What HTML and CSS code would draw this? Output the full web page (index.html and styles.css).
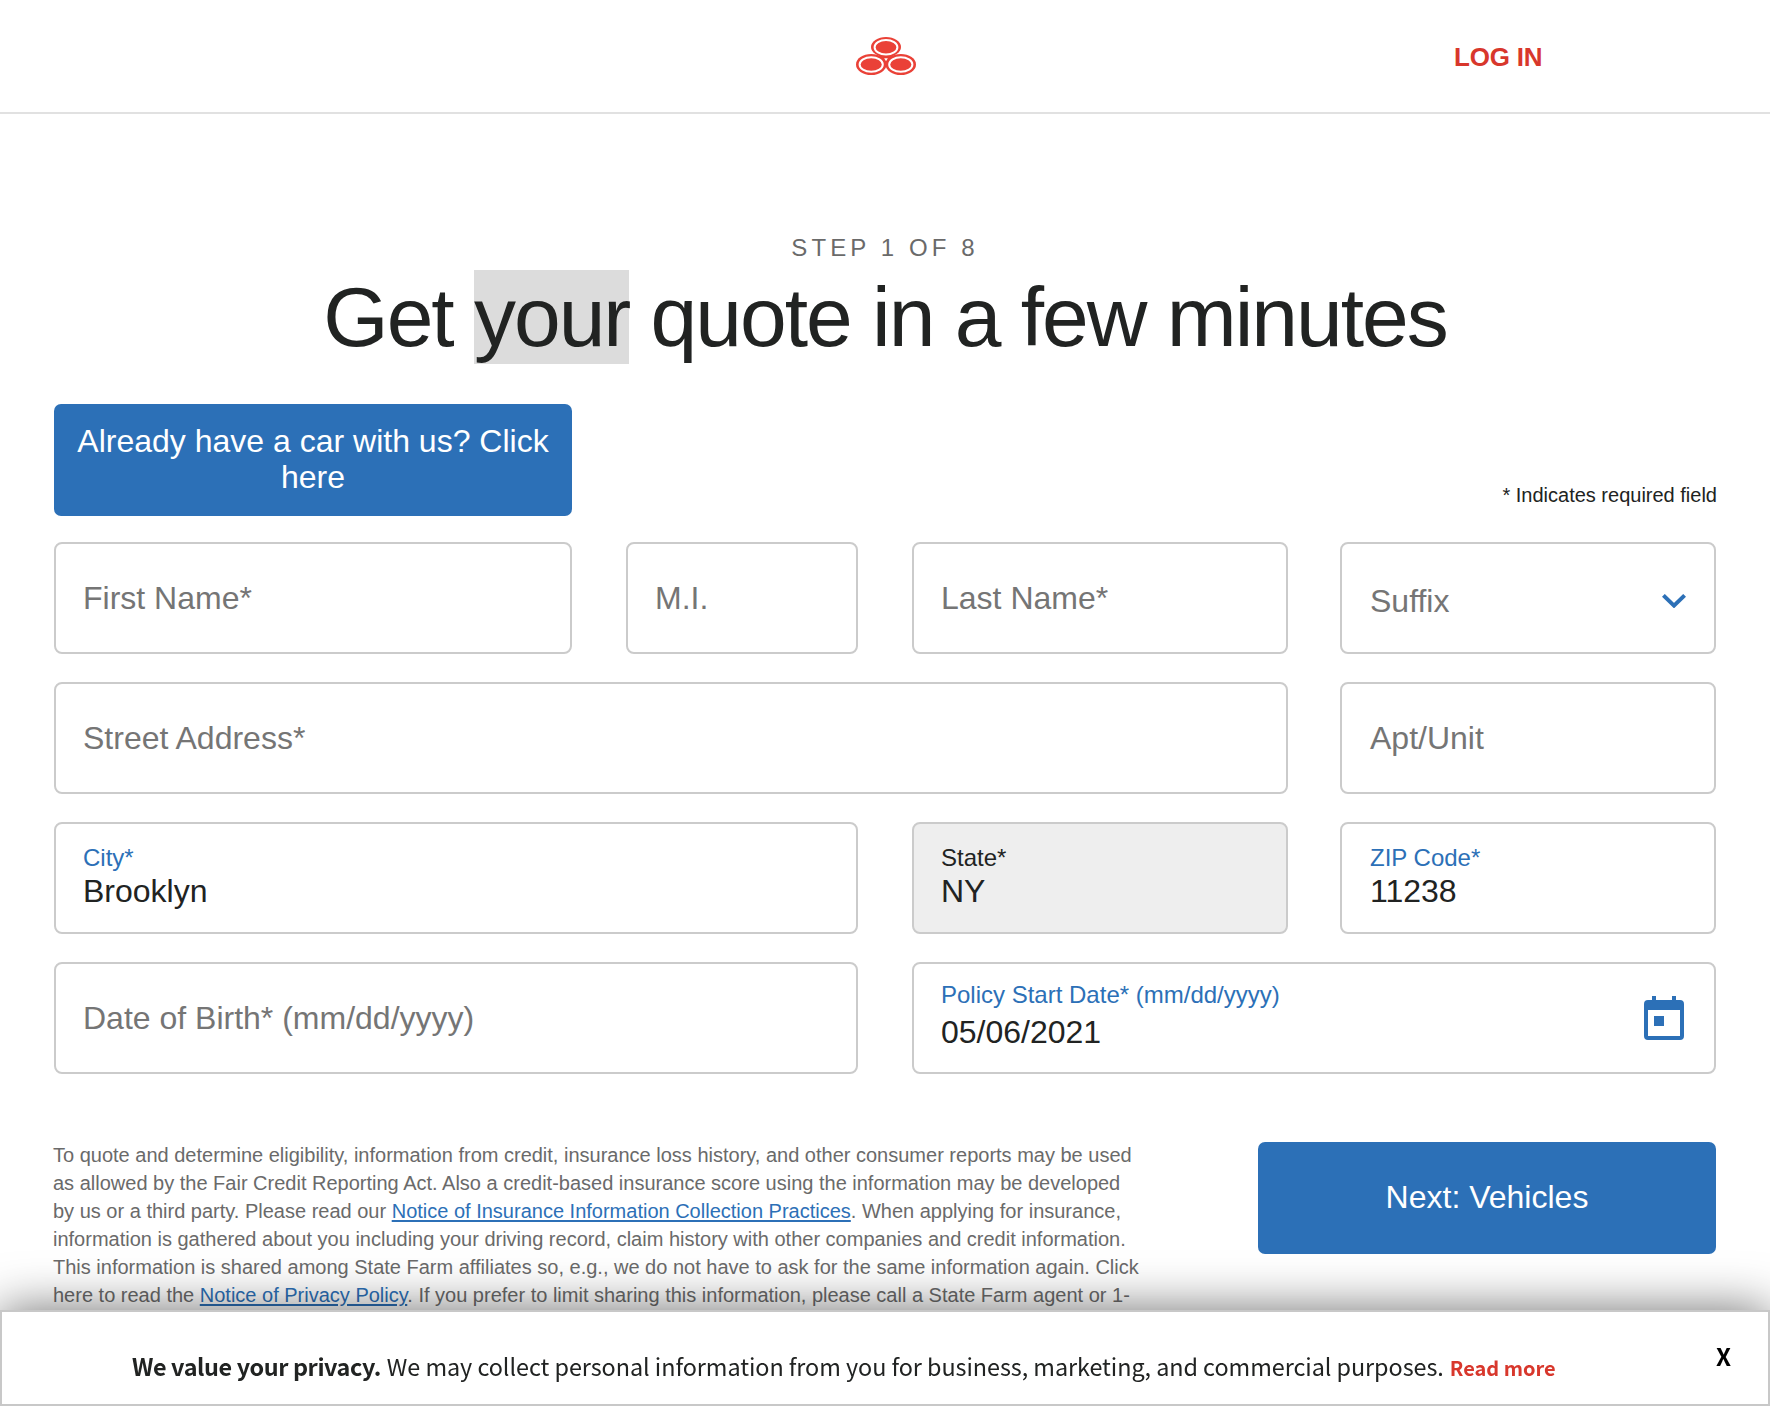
FILE: index.html
```html
<!DOCTYPE html>
<html lang="en">
<head>
<meta charset="utf-8">
<title>Get your quote</title>
<link rel="stylesheet" href="styles.css">
</head>
<body>
<header class="site-header">
  <a class="logo" aria-label="Home">
    <svg width="60" height="38" viewBox="0 0 60 38">
      <g fill="#ea4137">
        <path d="M22 17H38L32 29H28Z"/>
        <ellipse cx="30" cy="10" rx="15" ry="10"/>
        <ellipse cx="15.2" cy="27.5" rx="15.2" ry="10.5"/>
        <ellipse cx="44.8" cy="27.5" rx="15.2" ry="10.5"/>
      </g>
      <g fill="#ea4137" stroke="#fff" stroke-width="2">
        <ellipse cx="30" cy="10.2" rx="11.4" ry="7.2"/>
        <ellipse cx="15.2" cy="27.5" rx="11.6" ry="7.3"/>
        <ellipse cx="44.8" cy="27.5" rx="11.6" ry="7.3"/>
      </g>
      <path d="M28.2 21.3H31.8L30 24.3Z" fill="#fff"/>
    </svg>
  </a>
  <a class="login">LOG IN</a>
</header>

<main class="page">
  <p class="step">STEP 1 OF 8</p>
  <h1 class="title">Get <span class="selected">your</span> quote in a few minutes</h1>

  <div class="intro">
    <a class="button button-existing">Already have a car with us? Click here</a>
    <p class="required-note">* Indicates required field</p>
  </div>

  <form class="fields">
    <div class="field first"><span class="placeholder">First Name*</span></div>
    <div class="field middle"><span class="placeholder">M.I.</span></div>
    <div class="field last"><span class="placeholder">Last Name*</span></div>
    <div class="field end select">
      <span class="placeholder">Suffix</span>
      <svg class="chevron" width="24" height="14" viewBox="0 0 24 14"><path d="M1.4 1.4L12 11.6L22.6 1.4" fill="none" stroke="#2c70b7" stroke-width="4"/></svg>
    </div>

    <div class="field street"><span class="placeholder">Street Address*</span></div>
    <div class="field end"><span class="placeholder">Apt/Unit</span></div>

    <div class="field half-left filled"><span class="label">City*</span><span class="value">Brooklyn</span></div>
    <div class="field last filled disabled"><span class="label">State*</span><span class="value">NY</span></div>
    <div class="field end filled"><span class="label">ZIP Code*</span><span class="value">11238</span></div>

    <div class="field half-left"><span class="placeholder">Date of Birth* (mm/dd/yyyy)</span></div>
    <div class="field half-right date">
      <div class="date-text"><span class="label">Policy Start Date* (mm/dd/yyyy)</span><span class="value">05/06/2021</span></div>
      <svg class="calendar" width="40" height="44" viewBox="0 0 40 44" fill="#2c70b7">
        <path d="M8 0h4v4h16V0h4v4h4a4 4 0 0 1 4 4v32a4 4 0 0 1-4 4H4a4 4 0 0 1-4-4V8a4 4 0 0 1 4-4h4zM4 14v26h32V14z" fill-rule="evenodd"/>
        <path d="M10 20h10v10H10z"/>
      </svg>
    </div>
  </form>

  <div class="closing">
    <p class="disclosure">To quote and determine eligibility, information from credit, insurance loss history, and other consumer reports may be used as allowed by the Fair Credit Reporting Act. Also a credit-based insurance score using the information may be developed by us or a third party. Please read our <a>Notice of Insurance Information Collection Practices</a>. When applying for insurance, information is gathered about you including your driving record, claim history with other companies and credit information. This information is shared among State Farm affiliates so, e.g., we do not have to ask for the same information again. Click here to read the <a>Notice of Privacy Policy</a>. If you prefer to limit sharing this information, please call a State Farm agent or 1-</p>
    <a class="button button-next">Next: Vehicles</a>
  </div>
</main>

<aside class="privacy">
  <p class="privacy-text"><strong>We value your privacy.</strong><span class="privacy-body">We may collect personal information from you for business, marketing, and commercial purposes.</span><a class="read-more">Read more</a></p>
  <span class="close">X</span>
</aside>
</body>
</html>
```
FILE: styles.css
```css
* { box-sizing: border-box; }

body {
  margin: 0;
  height: 1406px;
  overflow: hidden;
  background: #fff;
  color: #212322;
  font-family: "Liberation Sans", Arial, sans-serif;
}

p, h1 { margin: 0; }

.site-header {
  display: grid;
  grid-template-columns: 1fr 60px 1fr;
  align-items: center;
  height: 114px;
  border-bottom: 2px solid #e1e1e1;
}

.logo { grid-column: 2; margin-left: 1px; line-height: 0; }

.login {
  padding: 1px 0 0 539px;
  color: #d8372c;
  font-size: 26px;
  font-weight: bold;
  line-height: 30px;
  letter-spacing: -.2px;
}

.page { padding: 120px 54px 0; }

.step {
  color: #6a6a6a;
  font-size: 24px;
  line-height: 28px;
  letter-spacing: 4.1px;
  text-align: center;
}

.title {
  margin: 8px 0 0;
  font-size: 84px;
  font-weight: normal;
  line-height: 94px;
  letter-spacing: -2.02px;
  text-align: center;
}

.selected { background: #dcdcdc; }

.intro {
  display: flex;
  justify-content: space-between;
  align-items: flex-end;
  margin-top: 40px;
}

.button {
  display: flex;
  align-items: center;
  justify-content: center;
  height: 112px;
  padding-bottom: 2px;
  border-radius: 7px;
  background: #2c70b7;
  color: #fff;
  font-size: 32px;
  line-height: 36px;
  text-align: center;
}

.button-existing { width: 518px; padding: 0 20px 2px; }

.required-note { margin-right: -1px; padding-bottom: 7px; font-size: 20px; line-height: 28px; }

.fields {
  display: grid;
  grid-template-columns: 518px 54px 232px 54px 376px 52px 376px;
  grid-auto-rows: 112px;
  row-gap: 28px;
  margin-top: 26px;
}

.field {
  display: flex;
  align-items: center;
  padding: 0 28px 0 27px;
  border: 2px solid #cbcbcb;
  border-radius: 8px;
  font-size: 32px;
  line-height: 36px;
}

.first { grid-column: 1; }
.middle { grid-column: 3; }
.last { grid-column: 5; }
.end { grid-column: 7; padding-left: 28px; }
.street { grid-column: 1 / 6; }
.half-left { grid-column: 1 / 4; }
.half-right { grid-column: 5 / 8; }

.placeholder { color: #757575; }

.select { justify-content: space-between; padding-top: 5px; }
.chevron { margin-bottom: 0; }

.filled { flex-direction: column; align-items: flex-start; padding-top: 19px; }
.label { display: block; color: #2c70b7; font-size: 24px; line-height: 29px; }
.value { display: block; }
.filled .value { margin-top: 1px; }
.filled { justify-content: flex-start; }

.disabled { background: #eee; }
.disabled .label { color: #212322; }

.date { justify-content: space-between; align-items: flex-start; }
.date-text { padding-top: 16px; }
.date .label { margin-bottom: 5px; }
.calendar { margin: 32px 2px 0 0; }

.closing {
  display: flex;
  justify-content: space-between;
  margin: 68px 0 0 -1px;
}

.disclosure { width: 1090px; margin-top: -1px; color: #6a6a6a; font-size: 20px; line-height: 28px; }
.disclosure a { color: #2c70b7; text-decoration: underline; text-decoration-thickness: 2px; text-underline-offset: 2px; }

.button-next { width: 458px; }

.privacy {
  position: fixed;
  inset: auto 0 0;
  display: flex;
  height: 96px;
  padding-left: 130px;
  border: 2px solid #c8c8c8;
  background: #fff;
  box-shadow: 0 0 50px rgba(0, 0, 0, .57);
  font-family: "Noto Sans CJK SC", sans-serif;
}

.privacy-text {
  display: flex;
  align-items: baseline;
  height: 36px;
  margin-top: 36px;
  font-size: 23.4px;
  line-height: 36px;
  white-space: nowrap;
}

.privacy-text strong { letter-spacing: -.4px; }
.privacy-body { margin-left: 6px; letter-spacing: -.06px; }
.read-more { margin-left: 6px; color: #d8372c; font-size: 20px; font-weight: bold; }

.close {
  margin: 26px 37px 0 auto;
  color: #000;
  font-size: 24px;
  font-weight: bold;
  line-height: 36px;
}
```
